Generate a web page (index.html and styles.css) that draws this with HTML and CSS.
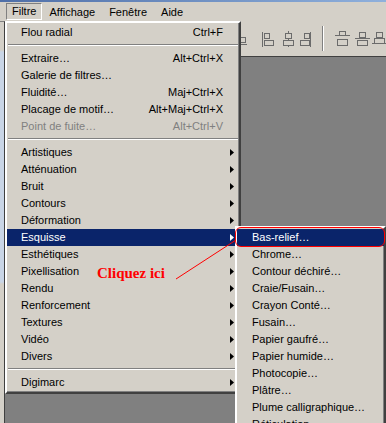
FILE: index.html
```html
<!DOCTYPE html>
<html lang="fr">
<head>
  <meta charset="UTF-8" />
  <title>Filtre &gt; Esquisse &gt; Bas-relief</title>
  <link rel="stylesheet" href="styles.css">
</head>
<body>

<div class="titlebar"></div>

<div class="menubar">
  <span class="menubar-item is-open">Filtre</span>
  <span class="menubar-item">Affichage</span>
  <span class="menubar-item">Fenêtre</span>
  <span class="menubar-item">Aide</span>
</div>

<div class="workspace">
  <div class="side-panel"></div>
  <div class="main">
    <div class="toolbar">
      <svg class="toolbar-icons" width="146" height="35" viewBox="0 0 146 35">
        <g fill="#d4d0c8" stroke="#6b6b6b" shape-rendering="crispEdges">
          <!-- partial icon under the menu edge -->
          <rect x="0.5" y="16.5" width="5" height="5" />
          <line x1="0" y1="23.5" x2="7" y2="23.5" />
          <!-- align left -->
          <line x1="22.5" y1="11" x2="22.5" y2="26" />
          <rect x="24.5" y="12.5" width="5" height="5" />
          <rect x="24.5" y="19.5" width="9" height="5" />
          <!-- align centre -->
          <line x1="48.5" y1="10" x2="48.5" y2="26" />
          <rect x="45.5" y="12.5" width="6" height="5" />
          <rect x="43.5" y="19.5" width="10" height="5" />
          <!-- align right -->
          <line x1="70.5" y1="11" x2="70.5" y2="26" />
          <rect x="64.5" y="12.5" width="5" height="5" />
          <rect x="60.5" y="19.5" width="9" height="5" />
          <!-- distribute -->
          <line x1="95" y1="14.5" x2="110" y2="14.5" />
          <rect x="99.5" y="10.5" width="6" height="4" />
          <rect x="97.5" y="18.5" width="10" height="6" />
          <line x1="115" y1="17.5" x2="130" y2="17.5" />
          <rect x="119.5" y="11.5" width="6" height="5" />
          <rect x="117.5" y="19.5" width="10" height="5" />
          <line x1="132" y1="22.5" x2="146" y2="22.5" />
          <rect x="136.5" y="11.5" width="6" height="5" />
          <rect x="134.5" y="17.5" width="10" height="5" />
        </g>
        <line x1="82.5" y1="5" x2="82.5" y2="30" stroke="#808080" shape-rendering="crispEdges" />
        <line x1="83.5" y1="5" x2="83.5" y2="30" stroke="#ffffff" shape-rendering="crispEdges" />
      </svg>
    </div>
    <div class="canvas"></div>
  </div>
</div>

<ul class="menu">
  <li class="menu-item"><span>Flou radial</span><span class="shortcut">Ctrl+F</span></li>
  <li class="menu-sep"></li>
  <li class="menu-item"><span>Extraire…</span><span class="shortcut">Alt+Ctrl+X</span></li>
  <li class="menu-item"><span>Galerie de filtres…</span></li>
  <li class="menu-item"><span>Fluidité…</span><span class="shortcut">Maj+Ctrl+X</span></li>
  <li class="menu-item"><span>Placage de motif…</span><span class="shortcut">Alt+Maj+Ctrl+X</span></li>
  <li class="menu-item is-disabled"><span>Point de fuite…</span><span class="shortcut">Alt+Ctrl+V</span></li>
  <li class="menu-sep"></li>
  <li class="menu-item has-sub"><span>Artistiques</span></li>
  <li class="menu-item has-sub"><span>Atténuation</span></li>
  <li class="menu-item has-sub"><span>Bruit</span></li>
  <li class="menu-item has-sub"><span>Contours</span></li>
  <li class="menu-item has-sub"><span>Déformation</span></li>
  <li class="menu-item has-sub is-active"><span>Esquisse</span></li>
  <li class="menu-item has-sub"><span>Esthétiques</span></li>
  <li class="menu-item has-sub"><span>Pixellisation</span></li>
  <li class="menu-item has-sub"><span>Rendu</span></li>
  <li class="menu-item has-sub"><span>Renforcement</span></li>
  <li class="menu-item has-sub"><span>Textures</span></li>
  <li class="menu-item has-sub"><span>Vidéo</span></li>
  <li class="menu-item has-sub"><span>Divers</span></li>
  <li class="menu-sep"></li>
  <li class="menu-item has-sub"><span>Digimarc</span></li>
</ul>

<ul class="menu submenu">
  <li class="menu-item is-active is-circled"><span>Bas-relief…</span></li>
  <li class="menu-item"><span>Chrome…</span></li>
  <li class="menu-item"><span>Contour déchiré…</span></li>
  <li class="menu-item"><span>Craie/Fusain…</span></li>
  <li class="menu-item"><span>Crayon Conté…</span></li>
  <li class="menu-item"><span>Fusain…</span></li>
  <li class="menu-item"><span>Papier gaufré…</span></li>
  <li class="menu-item"><span>Papier humide…</span></li>
  <li class="menu-item"><span>Photocopie…</span></li>
  <li class="menu-item"><span>Plâtre…</span></li>
  <li class="menu-item"><span>Plume calligraphique…</span></li>
  <li class="menu-item"><span>Réticulation…</span></li>
</ul>

<!-- annotation -->
<div class="callout">Cliquez ici</div>
<svg class="callout-line" width="386" height="423">
  <line x1="176" y1="279" x2="236" y2="240" stroke="#ff0000" stroke-width="1" />
</svg>

</body>
</html>
```

FILE: styles.css
```css
html, body {
  margin: 0;
  padding: 0;
}
body {
  width: 386px;
  height: 423px;
  overflow: hidden;
  position: relative;
  background: #d4d0c8;
  font-family: "Liberation Sans", Arial, sans-serif;
  font-size: 11px;
  color: #000;
}

.titlebar {
  height: 2px;
  background: linear-gradient(to right, #4f6fa8, #8fb0dc);
}

/* Menu bar */
.menubar {
  height: 19px;
  display: flex;
  align-items: center;
  padding-left: 6px;
}
.menubar-item {
  height: 17px;
  line-height: 17px;
  padding: 0 6px;
  box-sizing: border-box;
  border: 1px solid transparent;
}
.menubar-item.is-open {
  border-color: #808080 #ffffff #ffffff #808080;
  line-height: 15px;
  padding: 0 5px;
}

/* Background workspace */
.workspace {
  display: flex;
  height: 402px;
}
.side-panel {
  width: 4px;
  border-top: 1px solid #808080;
  border-right: 1px solid #404040;
  background: linear-gradient(#d4d0c8 0, #d4d0c8 28px, #c9d5e6 30px, #c9d5e6 260px, #d4d0c8 262px);
}
.main {
  flex: 1;
  display: flex;
  flex-direction: column;
}
.toolbar {
  height: 35px;
  display: flex;
  justify-content: flex-end;
  border-bottom: 1px solid #404040;
}
.toolbar-icons {
  display: block;
}
.canvas {
  flex: 1;
  background: #808080;
}

/* Drop-down menus */
.menu {
  position: absolute;
  left: 5px;
  top: 21px;
  width: 236px;
  box-sizing: border-box;
  margin: 0;
  padding: 1px 0;
  list-style: none;
  background: #d4d0c8;
  border: 2px solid;
  border-color: #ffffff #404040 #404040 #ffffff;
  box-shadow: inset -1px -1px 0 #808080;
}
.menu-item {
  display: grid;
  grid-template-columns: 1fr auto 16px;
  height: 17px;
  line-height: 17px;
  padding-left: 14px;
  white-space: nowrap;
  position: relative;
}
.menu-item .shortcut {
  grid-column: 2;
}
.menu-item.has-sub::after {
  content: "";
  grid-column: 3;
  width: 4px;
  height: 7px;
  margin: 5px 0 0 7px;
  background: #000;
  clip-path: polygon(0 0, 100% 50%, 0 100%);
}
.menu-item.is-disabled {
  color: #808080;
}
.menu-item.is-active {
  background: #0a246a;
  color: #fff;
}
.menu-item.is-active::after {
  background: #fff;
}
.menu-sep {
  height: 9px;
  margin: 0 1px;
  background: linear-gradient(transparent 3px, #808080 3px, #808080 4px, #ffffff 4px, #ffffff 5px, transparent 5px);
}

.submenu {
  left: 235px;
  top: 226px;
  width: 151px;
  border-right-width: 2px;
}
.submenu .menu-item {
  padding-left: 15px;
  grid-template-columns: 1fr;
}
.menu-item.is-circled::before {
  content: "";
  position: absolute;
  top: -2px;
  left: -2px;
  right: -1px;
  bottom: -1px;
  border: 1px solid #ff0000;
  border-radius: 6px;
}

/* Annotation */
.callout {
  position: absolute;
  left: 97px;
  top: 265px;
  font-family: "Liberation Serif", "Times New Roman", serif;
  font-weight: bold;
  font-size: 15px;
  color: #ff0000;
}
.callout-line {
  position: absolute;
  left: 0;
  top: 0;
  pointer-events: none;
}
```
